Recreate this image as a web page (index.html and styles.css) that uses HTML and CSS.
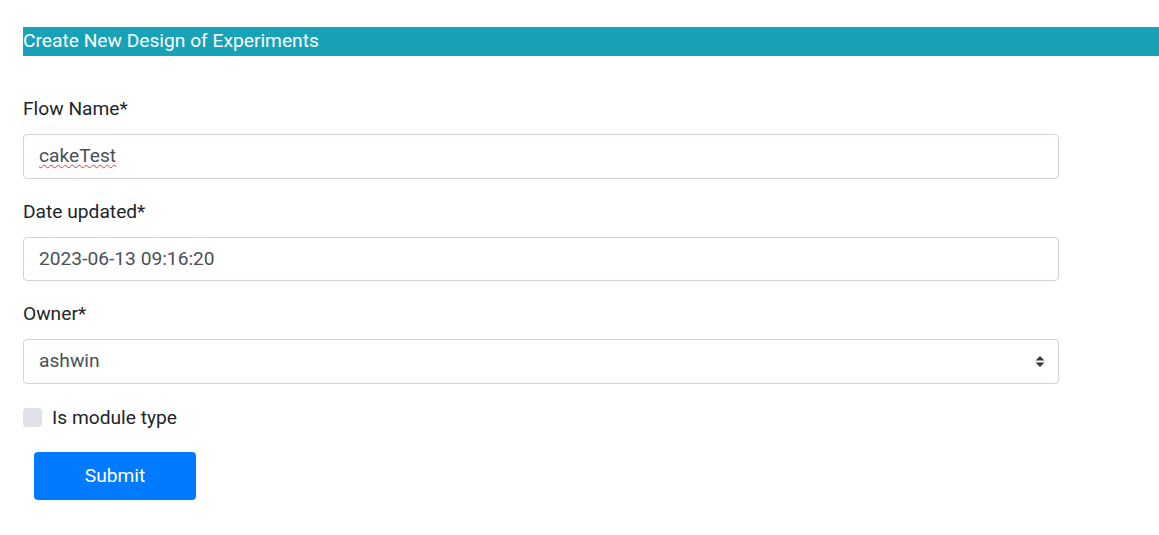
FILE: index.html
```html
<!DOCTYPE html>
<html>
<head>
  <title>Create New Design of Experiments</title>
  <meta charset="utf-8">
  <link rel="stylesheet" href="styles.css">
</head>
<body>
  <div class="page">
    <h4 class="page-title">Create New Design of Experiments</h4>
    <form class="doe-form">
      <div class="form-group">
        <label class="form-label" for="flowName">Flow Name*</label>
        <div class="input-wrap">
          <input class="form-control" id="flowName" type="text" value="cakeTest">
          <span class="spell-mark">cakeTest</span>
        </div>
      </div>
      <div class="form-group">
        <label class="form-label" for="dateUpdated">Date updated*</label>
        <input class="form-control" id="dateUpdated" type="text" value="2023-06-13 09:16:20">
      </div>
      <div class="form-group">
        <label class="form-label" for="owner">Owner*</label>
        <div class="input-wrap">
          <select class="form-control" id="owner">
            <option>ashwin</option>
          </select>
          <svg class="select-arrow" width="10" height="11" viewBox="0 0 10 11">
            <path d="M5 0 L9.5 4.5 H0.5 Z M5 11 L0.5 6.5 H9.5 Z" fill="#343a40"/>
          </svg>
        </div>
      </div>
      <div class="form-check">
        <span class="check-box"></span>
        <span class="check-label">Is module type</span>
      </div>
      <button class="btn-submit" type="button">Submit</button>
    </form>
  </div>
</body>
</html>
```

FILE: styles.css
```css
body {
  margin: 0;
  font-family: Roboto, "Liberation Sans", sans-serif;
  color: #212529;
  background: #fff;
}
.page {
  padding: 27px 0 0 23px;
}
.page-title {
  margin: 0;
  height: 29px;
  line-height: 28px;
  background: #17a2b8;
  color: #fff;
  font-size: 19.2px;
  font-weight: 400;
}
.doe-form {
  width: 1036px;
  padding-top: 39px;
}
.form-group {
  margin-bottom: 19px;
}
.form-label {
  display: block;
  font-size: 19.2px;
  line-height: 28px;
  margin-bottom: 11px;
}
.form-control {
  display: block;
  box-sizing: border-box;
  width: 100%;
  height: 44.5px;
  padding: 0 15px 1px;
  border: 1px solid #ced4da;
  border-radius: 4px;
  font-family: Roboto, "Liberation Sans", sans-serif;
  font-size: 19.2px;
  color: #495057;
  background: #fff;
  outline: none;
  appearance: none;
  -webkit-appearance: none;
}
.input-wrap {
  position: relative;
}
.spell-mark {
  position: absolute;
  left: 16px;
  top: 0;
  line-height: 42px;
  font-size: 19.2px;
  color: transparent;
  text-decoration: underline wavy #e53935 1px;
  text-underline-offset: 3px;
  pointer-events: none;
}
.select-arrow {
  position: absolute;
  right: 14px;
  top: 17px;
  pointer-events: none;
}
.form-check {
  display: flex;
  align-items: center;
  gap: 10px;
  margin-top: 24px;
  height: 19px;
}
.check-box {
  width: 19px;
  height: 19px;
  border-radius: 4px;
  background: #dee2e6;
}
.check-label {
  font-size: 19.2px;
}
.btn-submit {
  display: block;
  margin: 25px 0 0 11px;
  width: 162px;
  height: 48px;
  border: none;
  border-radius: 4px;
  background: #007bff;
  color: #fff;
  font-family: Roboto, "Liberation Sans", sans-serif;
  font-size: 19.2px;
  line-height: 44px;
}
```
